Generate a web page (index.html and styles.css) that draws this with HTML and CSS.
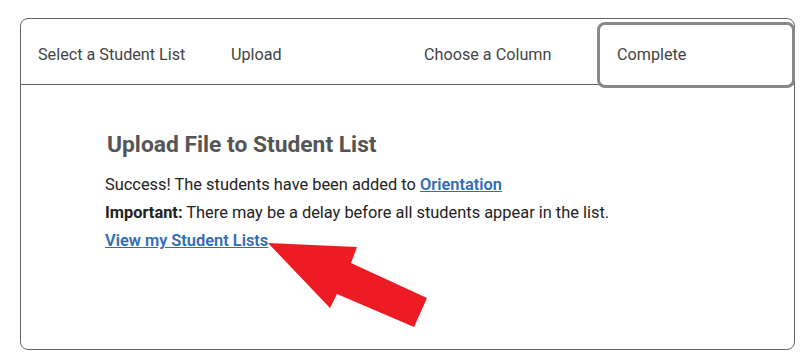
FILE: index.html
```html
<!DOCTYPE html>
<html lang="en">
<head>
    <meta charset="UTF-8">
    <meta name="viewport" content="width=device-width, initial-scale=1.0">
    <title>Upload File to Student List</title>
    <link rel="stylesheet" href="styles.css">
</head>
<body>
    <div class="card">
        <ul class="steps">
            <li class="step">Select a Student List</li>
            <li class="step">Upload</li>
            <li class="step">Choose a Column</li>
            <li class="step active">Complete</li>
        </ul>

        <div class="content">
            <h2>Upload File to Student List</h2>
            <p>Success! The students have been added to <a href="#">Orientation</a></p>
            <p><strong>Important:</strong> There may be a delay before all students appear in the list.</p>
            <p><a href="#">View my Student Lists</a></p>
        </div>
    </div>

    <!-- annotation arrow -->
    <svg class="arrow" width="811" height="363" viewBox="0 0 811 363">
        <polygon points="268,243 357,247 351,263 427,298 414,327 337,294 330,308" fill="#ed1c24"/>
    </svg>
</body>
</html>
```

FILE: styles.css
```css
/* General Page Styling */
body {
    font-family: Roboto, "Liberation Sans", Arial, sans-serif;
    background-color: white;
    color: #222;
    margin: 0;
    padding: 0;
    position: relative;
}

/* Card */
.card {
    width: 773px;
    height: 330px;
    margin: 18px 0 0 20px;
    border: 1px solid #666;
    border-radius: 8px;
}

/* Steps */
.steps {
    list-style: none;
    display: flex;
    align-items: flex-start;
    height: 65px;
    margin: 0;
    padding: 0;
    border-bottom: 1px solid #666;
}

.step {
    width: 193px;
    box-sizing: border-box;
    height: 65px;
    line-height: 71px;
    padding-left: 17px;
    font-size: 16.2px;
    color: #444;
}

.step.active {
    flex: 1;
    height: 66px;
    line-height: 60px;
    margin: 3px -1px 0 -3px;
    padding-left: 17px;
    border: 3px solid #888;
    border-radius: 8px;
    background: white;
    position: relative;
}

/* Content */
.content {
    padding: 46px 0 0 84px;
}

h2 {
    font-size: 22.8px;
    line-height: 28px;
    color: #555;
    margin: 0 0 12px 2px;
}

.content p {
    font-size: 16.4px;
    line-height: 28px;
    margin: 0;
}

.content a {
    color: #2d6db5;
    font-weight: 600;
}

.arrow {
    position: absolute;
    left: 0;
    top: 0;
}
```
